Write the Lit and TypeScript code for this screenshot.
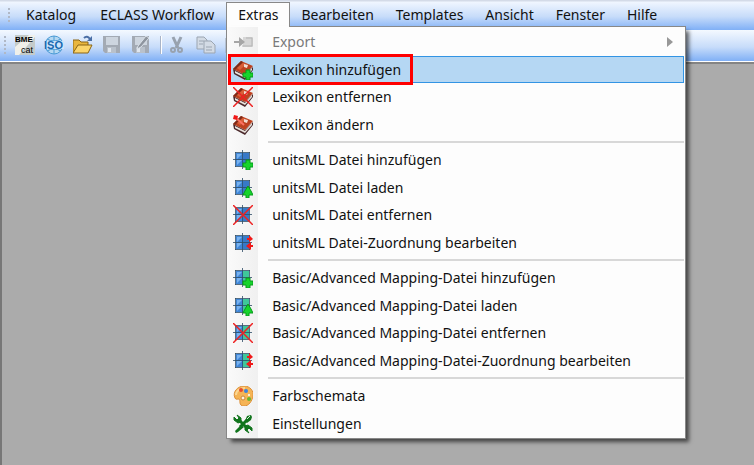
import { LitElement, html, svg, css, TemplateResult } from "lit";
import { customElement } from "lit/decorators.js";

type Entry = { label: string; icon: TemplateResult; state?: "disabled" | "active" };

const book = svg`
  <path d="M0 9L12 15L20 7V10L12 20L1 14Z" fill="#4b2a2c"/>
  <path d="M2 11L12 16L19 8V10L12 18L2 13Z" fill="#e9e2dc"/>
  <path d="M0 9L8 1L20 6L12 15Z" fill="#bd4220"/>
  <path d="M0 9L8 1L10 2L2 10Z" fill="#7d2a18"/>
  <path d="M4 8L10 3L13 4L7 10Z" fill="#d9603a"/>
  <path d="M11 4L15 5L14 8L11 7Z" fill="#f2ded2"/>`;
const grid = (right: string) => svg`
  <rect x="3" y="3" width="13" height="13" fill="#3f86d8"/>
  <rect x="10" y="3" width="6" height="13" fill="${right}"/>
  <path d="M4 9L9 4H4ZM4 15L9 10H4Z" fill="#79b2ee"/>
  <path d="M2 2.500H17M2 16.500H17M2.500 2V17M16.500 2V17M9.500 0V19M0 9.500H19" fill="none" stroke="#2d4c66" stroke-opacity="0.8"/>`;
const plus = svg`<path d="M13 10h4v3h3v4h-3v3h-4v-3h-3v-4h3Z" fill="#16d42c" stroke="#069a1a"/>`;
const tree = svg`<path d="M15 8l3 5 2 4h-4v3h-3v-3h-3l2-4Z" fill="#16d42c" stroke="#069a1a"/>`;
const cross = svg`<path d="M0 0L20 20M20 0L0 20" stroke="#ee2222" stroke-width="1.500" fill="none"/>`;
const swap = svg`<path d="M14 5h2V2l4 4-4 3V7h-2Z M20 12h-2V9l-5 4 5 4v-3h2Z" fill="#f01818"/>`;
const icon = (body: unknown) => html`<svg class="icon" viewBox="0 0 20 20" aria-hidden="true">${body}</svg>`;
const BLUE = "#3779c8";
const GREEN = "#3fc79a";

const groups: Entry[][] = [
  [
    { label: "Export", state: "disabled", icon: icon(svg`<path d="M10 5h10v10H10z" fill="#d6d6d6"/><path d="M1 9h5V5l6 5-6 5v-4H1z" fill="#a6a6a6"/><path d="M13 6h6v8H9" stroke="#b4b4b4" fill="none"/>`) },
    { label: "Lexikon hinzufügen", state: "active", icon: icon([book, plus]) },
    { label: "Lexikon entfernen", icon: icon([book, cross]) },
    { label: "Lexikon ändern", icon: icon([book, svg`<path d="M3 3L11 10" stroke="#ff7262" stroke-width="2"/><path d="M1 0l4 1-1 4-4-1z" fill="#f01818"/>`]) },
  ],
  [
    { label: "unitsML Datei hinzufügen", icon: icon([grid(BLUE), plus]) },
    { label: "unitsML Datei laden", icon: icon([grid(BLUE), tree]) },
    { label: "unitsML Datei entfernen", icon: icon([grid(BLUE), cross]) },
    { label: "unitsML Datei-Zuordnung bearbeiten", icon: icon([grid(BLUE), swap]) },
  ],
  [
    { label: "Basic/Advanced Mapping-Datei hinzufügen", icon: icon([grid(GREEN), plus]) },
    { label: "Basic/Advanced Mapping-Datei laden", icon: icon([grid(GREEN), tree]) },
    { label: "Basic/Advanced Mapping-Datei entfernen", icon: icon([grid(GREEN), cross]) },
    { label: "Basic/Advanced Mapping-Datei-Zuordnung bearbeiten", icon: icon([grid(GREEN), swap]) },
  ],
  [
    { label: "Farbschemata", icon: icon(svg`
      <path d="M2 12C-1 6 5 0 11 0s10 5 9 10-4 10-9 10c-6 0-3-6-5-7-2 0-3 1-4-1Z" fill="#f5b455" stroke="#dd9038"/>
      <path d="M3 9C3 4 8 2 12 2" stroke="#fbd794" stroke-width="2" fill="none"/>
      <circle cx="8" cy="4" r="2" fill="#e84a2c"/><circle cx="13" cy="5" r="2" fill="#3c83de"/><circle cx="16" cy="9" r="1" fill="#fff"/><circle cx="16" cy="13" r="2" fill="#67b52e"/><circle cx="10" cy="12" r="2" fill="#fff3dd" stroke="#c9853a"/>`) },
    { label: "Einstellungen", icon: icon(svg`
      <path d="M5 5L15 15M14 6L7 13" stroke="#11751d" stroke-width="3"/>
      <path d="M4 1l4 3v4L5 9 1 6V3l3 3 2-2ZM16 19l-4-3v-4l3-1 4 3v3l-3-3-2 2Z" fill="#11751d" stroke="#11751d"/>
      <path d="M12 7l2-5 4-1 1 2-1 3-4 3Z" fill="#11751d"/><path d="M8 11L2 17l1 2 2-1 6-5Z" fill="#11751d"/><path d="M14 5l3-3" stroke="#d8ecd9"/>`) },
  ],
];

const floppy = svg`<path d="M1 1h17v17H3l-2-2Z" fill="#a3aab4"/><path d="M4 2h12v8H4z" fill="#cdd5df"/><path d="M5 12h9v6H5z" fill="#b9c1cb"/><path d="M6 13h3v4H6z" fill="#e0e6ee"/>`;
const tool = (body: unknown) => html`<svg class="tool" viewBox="0 0 20 20" aria-hidden="true">${body}</svg>`;

const tools: [string, TemplateResult][] = [
  ["BMEcat", tool(svg`<path d="M0 0h20v20H0z" fill="#c4cbca"/><path d="M0 20V12L14 0H20V2L4 20Z" fill="#f0f0ea"/><text x="0" y="7" class="tiny">BME</text><text x="6" y="18" class="cat">cat</text>`)],
  ["ISO", tool(svg`<circle cx="10" cy="10" r="9" fill="#b5d8f2" stroke="#4a9bd5"/><path d="M10 1v18M3 4q7 4 14 0M3 16q7-4 14 0" stroke="#4a9bd5" fill="none"/><path d="M0 6h20v8H0z" fill="#cfe4fa"/><text x="0" y="14" class="iso">ISO</text>`)],
  ["Öffnen", tool(svg`<path d="M0 18V5h6l2 2h7v4" fill="#e9b63e" stroke="#8a6516"/><path d="M0 18L5 10H19L15 18Z" fill="#fbd56b" stroke="#8a6516"/><path d="M11 3q3-3 6 1" stroke="#4a6ea5" stroke-width="2" fill="none"/><path d="M19 1v5h-5z" fill="#4a6ea5"/>`)],
  ["Speichern", tool(floppy)],
  ["Speichern unter", tool([floppy, svg`<path d="M7 11L15 1l3 2-8 9-4 2Z" fill="#8e959f" stroke="#dbe2ea"/>`])],
];
const editTools: [string, TemplateResult][] = [
  ["Ausschneiden", tool(svg`<path d="M6 2l5 11M14 2L9 13" stroke="#98a2af" stroke-width="3"/><circle cx="6" cy="15" r="2" fill="none" stroke="#98a2af" stroke-width="2"/><circle cx="13" cy="15" r="2" fill="none" stroke="#98a2af" stroke-width="2"/>`)],
  ["Kopieren", tool(svg`<path d="M1 2h7l3 3v9H1z" fill="#d3dbe5" stroke="#9ba5b1"/><path d="M3 6h5M3 9h4" stroke="#9ba5b1"/><path d="M8 6h7l4 4v8H8z" fill="#d3dbe5" stroke="#9ba5b1"/><path d="M10 12h6M10 15h6" stroke="#9ba5b1"/>`)],
  ["Einfügen", tool(svg`<path d="M1 3h14v15H1z" fill="#c2cbd6" stroke="#9ba5b1"/>`)],
];

@customElement("app-root")
export class AppRoot extends LitElement {
  static styles = css`
    :host { display: flex; flex-direction: column; min-height: 100vh; position: relative; background: #ababab; color: #111; font: 14px/20px "Noto Sans", "Open Sans", sans-serif; }
    button { font: inherit; color: inherit; border: 0; background: none; margin: 0; padding: 0; text-align: left; white-space: nowrap; }
    .menubar { display: flex; align-items: stretch; height: 30px; padding-left: 8px; box-sizing: border-box; background: linear-gradient(#d4dbe8 0 1px, #f0f6ff 2px, #c7dcfa 55%, #80b0f6); }
    .grip { width: 2px; margin-right: 4px; flex: none; align-self: center; height: 14px; background: repeating-linear-gradient(#b0b8c6 0 2px, #fff0 2px 4px); }
    .bar-item { position: relative; display: flex; margin-top: 2px; height: 25px; }
    .bar-item > .top { padding: 0 11px; border: 1px solid #fff0; border-bottom: 0; }
    .bar-item.open > .top { background: #fdfdfd; border-color: #888; }
    .bar-item.open ~ .bar-item > .top { padding: 0 10px; }
    .toolbar { display: flex; align-items: center; box-sizing: border-box; height: 32px; padding: 0 0 2px 4px; gap: 9px; background: linear-gradient(#f4f9ff, #c7dcfa 55%, #80b0f6); border-bottom: 1px solid #fff; }
    .toolbar .grip { height: 18px; margin: 0; }
    .toolbar button { display: flex; }
    .tool { width: 20px; height: 20px; }
    .tiny { font: bold 8px "Liberation Sans", sans-serif; }
    .cat { font: 9px "Liberation Sans", sans-serif; }
    .iso { font: bold 11px "Liberation Sans", sans-serif; fill: #1769b0; }
    .divider { width: 2px; height: 18px; margin-right: -4px; background: linear-gradient(90deg, #a8b4c8 50%, #fff 50%); }
    .workspace { flex: 1; border-top: 2px solid #848484; border-left: 2px solid #777; }
    .menu { position: absolute; z-index: 2; top: 24px; left: 0; width: 460px; box-sizing: border-box; padding: 1px; border: 1px solid #888; background: linear-gradient(90deg, #fafafa, #f0f0f0 31px, #fdfdfd 31px); box-shadow: 4px 4px 4px -1px #0009; }
    .cover { position: absolute; z-index: 3; top: 24px; left: 1px; right: 1px; height: 1px; background: #fdfdfd; }
    .group { display: grid; grid-auto-rows: 28px 27px; }
    .row { position: relative; display: grid; grid-template-columns: 20px 1fr 8px; align-items: center; column-gap: 19px; padding: 0 8px 0 4px; border: 1px solid #fff0; }
    .row.active { background: #b5d7f3; border-color: #3294e4; }
    .row.disabled { color: #7a7a7a; }
    .icon { width: 20px; height: 20px; display: block; }
    .arrow { width: 6px; height: 10px; fill: #989898; }
    .mark { position: absolute; top: -3px; left: -1px; width: 185px; height: 31px; box-sizing: border-box; border: 3px solid #f00; pointer-events: none; }
    .separator { height: 2px; margin: 3px 0 3px 40px; border: 0; background: #d8d8d8; }
  `;

  private row(entry: Entry) {
    const state = entry.state ?? "";
    return html`<button class="row ${state}" role="menuitem" ?disabled=${state === "disabled"}>
      ${entry.icon}<span>${entry.label}</span>
      ${state === "disabled" ? html`<svg class="arrow" viewBox="0 0 6 10"><path d="M0 0L6 5L0 10Z"/></svg>` : ""}
      ${state === "active" ? html`<span class="mark"></span>` : ""}
    </button>`;
  }

  private menu() {
    return html`<span class="cover"></span><div class="menu" role="menu">
      ${groups.map((g, i) => html`${i ? html`<hr class="separator" />` : ""}<div class="group">${g.map((e) => this.row(e))}</div>`)}
    </div>`;
  }

  render() {
    const tops = ["Katalog", "ECLASS Workflow", "Extras", "Bearbeiten", "Templates", "Ansicht", "Fenster", "Hilfe"];
    return html`
      <nav class="menubar"><span class="grip"></span>
        ${tops.map((t) => html`<div class="bar-item ${t === "Extras" ? "open" : ""}"><button class="top">${t}</button>${t === "Extras" ? this.menu() : ""}</div>`)}
      </nav>
      <div class="toolbar" role="toolbar"><span class="grip"></span>
        ${tools.map(([n, i]) => html`<button aria-label=${n}>${i}</button>`)}
        <span class="divider"></span>
        ${editTools.map(([n, i]) => html`<button aria-label=${n}>${i}</button>`)}
      </div>
      <main class="workspace"></main>`;
  }
}
